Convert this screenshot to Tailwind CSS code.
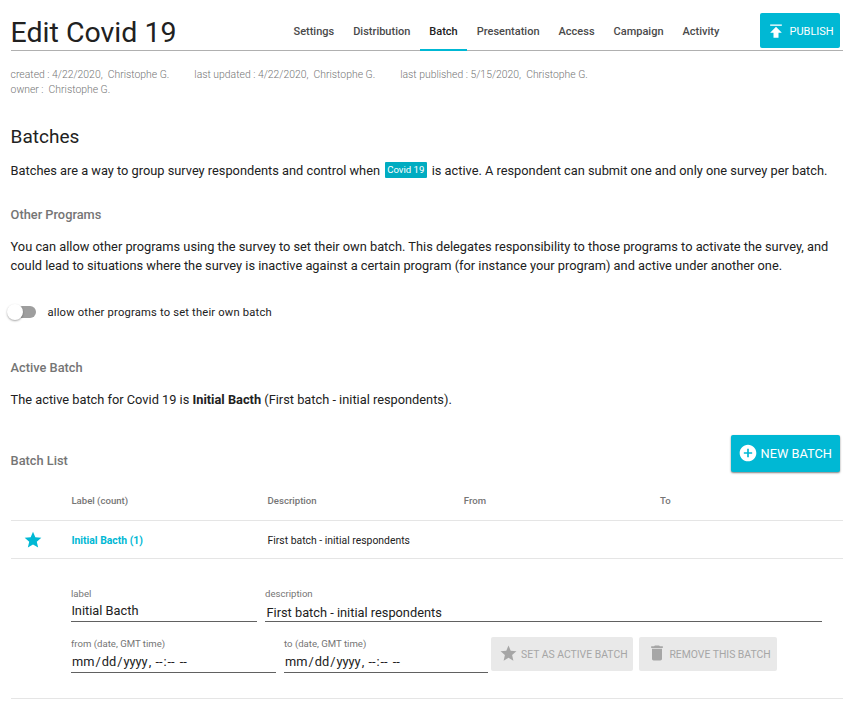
<!DOCTYPE html>
<html lang="en">
<head>
<meta charset="utf-8">
<title>Edit Covid 19</title>
<script src="https://cdn.jsdelivr.net/npm/@tailwindcss/browser@4"></script>
</head>
<body class="bg-white font-[Roboto,sans-serif] text-[12.8px] leading-[19.2px] text-[#212121] overflow-hidden">
<main class="pl-[10.6px] pr-[13px] h-[722px]">
  <header class="h-[51px] border-b border-[#b0b0b0] flex items-start">
    <h1 class="text-[28.5px] leading-[40px] pt-[13px] w-[273.4px] whitespace-nowrap">Edit Covid 19</h1>
    <nav class="flex h-[51px] text-[11px] font-medium leading-[18px] text-[#4a4a4a]">
      <a class="h-[51px] pt-[23px] px-[9.5px]">Settings</a>
      <a class="h-[51px] pt-[23px] px-[9.5px]">Distribution</a>
      <a class="h-[51px] pt-[23px] px-[9.5px] text-[#212121] border-b-2 border-[#00b8d4]">Batch</a>
      <a class="h-[51px] pt-[23px] px-[9.5px]">Presentation</a>
      <a class="h-[51px] pt-[23px] px-[9.5px]">Access</a>
      <a class="h-[51px] pt-[23px] px-[9.5px]">Campaign</a>
      <a class="h-[51px] pt-[23px] px-[9.5px]">Activity</a>
    </nav>
    <button class="ml-auto mr-[3px] mt-[13px] w-20 h-[35px] rounded-[2px] bg-[#00b8d4] text-white text-[11px] flex items-center pl-[6px]">
      <svg class="w-5 h-5 shrink-0" viewBox="0 0 24 24" fill="currentColor"><path opacity=".8" d="M5 4v2h14V4H5z"/><path d="M5 14h4v6h6v-6h4l-7-7-7 7z"/></svg>
      <span class="ml-[3.5px] mt-[2px]">PUBLISH</span>
    </button>
  </header>

  <section class="pt-[16px] text-[10.4px] leading-[15px] font-light text-[#757575]">
    <div class="flex gap-[25px] whitespace-pre"><span>created : 4/22/2020,  Christophe G.</span><span>last updated : 4/22/2020,  Christophe G.</span><span>last published : 5/15/2020,  Christophe G.</span></div>
    <div class="whitespace-pre">owner :  Christophe G.</div>
  </section>

  <h2 class="mt-[26px] text-[19px] leading-[28px]">Batches</h2>
  <p class="mt-[10px] h-[19px] whitespace-nowrap flex">Batches are a way to group survey respondents and control when<span class="ml-[4.800px] mr-[4.900px] mt-[1px] h-[16px] w-[42px] rounded-[1px] bg-[#00acc1] text-white text-[9.6px] leading-[15px] text-center">Covid 19</span>is active. A respondent can submit one and only one survey per batch.</p>

  <h3 class="mt-[25px] font-medium text-[#757575]">Other Programs</h3>
  <p class="mt-[13px] whitespace-nowrap">You can allow other programs using the survey to set their own batch. This delegates responsibility to those programs to activate the survey, and<br>could lead to situations where the survey is inactive against a certain program (for instance your program) and active under another one.</p>

  <label class="mt-[27px] h-[20px] flex items-center text-[11.2px] tracking-[0.19px]">
    <span class="w-[28px] h-[16px] -ml-[2.600px] -mt-px flex items-center shrink-0">
      <span class="w-[28px] h-[12px] rounded-full bg-[#9e9e9e] flex items-center">
        <span class="w-4 h-4 -ml-px rounded-full bg-white shadow-[0_1px_2px_rgba(0,0,0,0.35)] shrink-0"></span>
      </span>
    </span>
    <span class="ml-[11.5px]">allow other programs to set their own batch</span>
  </label>

  <h3 class="mt-[35px] font-medium text-[#757575]">Active Batch</h3>
  <p class="mt-[13px]">The active batch for Covid 19 is <b class="font-bold">Initial Bacth</b> (First batch - initial respondents).</p>

  <div class="mt-[26px] h-[37px] flex justify-between">
    <h3 class="font-medium text-[#757575] mt-[16px]">Batch List</h3>
    <button class="mr-[3px] w-[109px] h-[37px] rounded-[2px] bg-[#00b8d4] text-white flex items-center pl-[7px] shadow-[0_1px_2px_rgba(0,0,0,0.5)] whitespace-nowrap">
      <svg class="w-5 h-5 shrink-0 -mt-px" viewBox="0 0 24 24" fill="currentColor"><path d="M12 2C6.48 2 2 6.48 2 12s4.48 10 10 10 10-4.48 10-10S17.520 2 12 2zm5 11h-4v4h-2v-4H7v-2h4V7h2v4h4v2z"/></svg>
      <span class="ml-[2.500px]">NEW BATCH</span>
    </button>
  </div>

  <div class="mt-[10px] h-[39px] border-b border-[#e5e5e5] grid grid-cols-[60.8px_196.2px_196.2px_196.2px_1fr] items-center text-[9.6px] font-medium text-[#757575]">
    <span></span><span>Label (count)</span><span>Description</span><span>From</span><span>To</span>
  </div>
  <div class="h-[38px] border-b border-[#e5e5e5] grid grid-cols-[60.8px_196.2px_196.2px_196.2px_1fr] items-center text-[10.4px]">
    <svg class="w-5 h-5 ml-[12px]" viewBox="0 0 24 24" fill="#00b8d4"><path d="M12 17.270 18.180 21l-1.640-7.030L22 9.240l-7.190-.61L12 2 9.190 8.630 2 9.240l5.460 4.730L5.820 21z"/></svg>
    <span class="font-bold text-[#00b8d4] pt-[2px]">Initial Bacth (1)</span><span class="pt-[2px]">First batch - initial respondents</span>
  </div>

  <form class="h-[140px] border-b border-[#e5e5e5] pt-[28px] pl-[60.4px]">
    <div class="flex gap-2">
      <div class="w-[186px] h-[35px] border-b border-[#616161]">
        <div class="text-[9.6px] leading-[14px] text-[#757575]">label</div>
        <div class="leading-[19px] pl-[0.4px]">Initial Bacth</div>
      </div>
      <div class="w-[557px] h-[35px] border-b border-[#616161]">
        <div class="text-[9.6px] leading-[14px] text-[#757575]">description</div>
        <div class="leading-[19px] pt-[2px] pl-[1.5px]">First batch - initial respondents</div>
      </div>
    </div>
    <div class="flex mt-[15px]">
      <div class="w-[205px] mr-2 h-[36px] border-b border-[#616161]">
        <div class="text-[9.6px] leading-[14px] text-[#757575]">from (date, GMT time)</div>
        <div class="leading-[19px] pt-[1px] whitespace-pre"><span class="px-px">mm</span>/<span class="px-px">dd</span>/<span class="px-px">yyyy</span>, <span class="px-px">--</span>:<span class="px-px">--</span> <span class="px-px">--</span></div>
      </div>
      <div class="w-[204px] h-[36px] border-b border-[#616161]">
        <div class="text-[9.6px] leading-[14px] text-[#757575]">to (date, GMT time)</div>
        <div class="leading-[19px] pt-[1px] whitespace-pre"><span class="px-px">mm</span>/<span class="px-px">dd</span>/<span class="px-px">yyyy</span>, <span class="px-px">--</span>:<span class="px-px">--</span> <span class="px-px">--</span></div>
      </div>
      <button type="button" disabled class="ml-[3px] w-[142px] h-[34px] rounded-[2px] bg-[#e9e9e9] text-[#a6a6a6] text-[10.4px] flex items-center pl-[8px] whitespace-nowrap">
        <svg class="w-[19px] h-[19px] shrink-0 -mt-px" viewBox="0 0 24 24" fill="currentColor"><path d="M12 17.270 18.180 21l-1.640-7.030L22 9.240l-7.190-.61L12 2 9.190 8.630 2 9.240l5.460 4.730L5.820 21z"/></svg>
        <span class="ml-[3px] mt-[2px]">SET AS ACTIVE BATCH</span>
      </button>
      <button type="button" disabled class="ml-[6px] w-[138px] h-[34px] rounded-[2px] bg-[#e9e9e9] text-[#a6a6a6] text-[10.4px] flex items-center pl-[8px] whitespace-nowrap">
        <svg class="w-5 h-5 shrink-0 -mt-[2px]" viewBox="0 0 24 24" fill="currentColor"><path d="M6 19c0 1.100.9 2 2 2h8c1.100 0 2-.9 2-2V7H6v12zM19 4h-3.500l-1-1h-5l-1 1H5v2h14V4z"/></svg>
        <span class="ml-[2.400px] mt-[2px]">REMOVE THIS BATCH</span>
      </button>
    </div>
  </form>
</main>
</body>
</html>
